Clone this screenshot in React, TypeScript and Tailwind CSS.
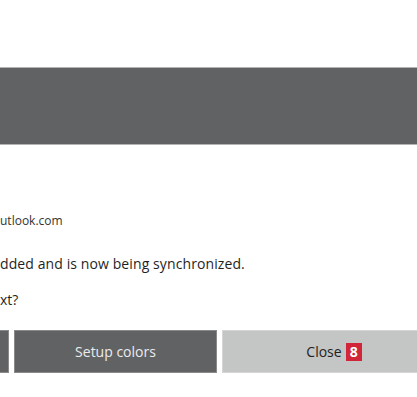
export default function App() {
  return (
    <div
      className="w-[417px] h-[397px] overflow-hidden bg-white text-[#1f1f1f]"
      style={{ fontFamily: '"Open Sans", "Noto Sans", sans-serif' }}
    >
      <div className="h-[67px]" />
      {/* header band */}
      <div className="h-[78px] bg-[#616264] border-t border-b border-[#b4b4b4]" />

      <div className="flex flex-col">
        <div className="mt-[68px] text-[12px] leading-[16px] text-[#333]">utlook.com</div>
        <div className="mt-[25px] text-[14px] leading-[20px] tracking-[0.1px]">dded and is now being synchronized.</div>
        <div className="mt-[16px] text-[14px] leading-[20px]">xt?</div>

        <div className="mt-[20px] flex gap-[5px] -ml-[194px]">
          <button className="w-[203px] h-[43px] shrink-0 bg-[#616264] border border-[#8a8a8a]" />
          <button className="w-[203px] h-[43px] shrink-0 bg-[#616264] border border-[#8a8a8a] text-[14px] text-[#ececec]">
            Setup colors
          </button>
          <button className="w-[224px] h-[43px] shrink-0 bg-[#c4c5c5] border border-[#d6d6d6] text-[14px] text-[#222] flex items-center justify-center gap-[4px]">
            <span>Close</span>
            <span className="bg-[#d1263a] text-white font-bold text-[14px] leading-[18px] px-[4px]">8</span>
          </button>
        </div>
      </div>
    </div>
  );
}
